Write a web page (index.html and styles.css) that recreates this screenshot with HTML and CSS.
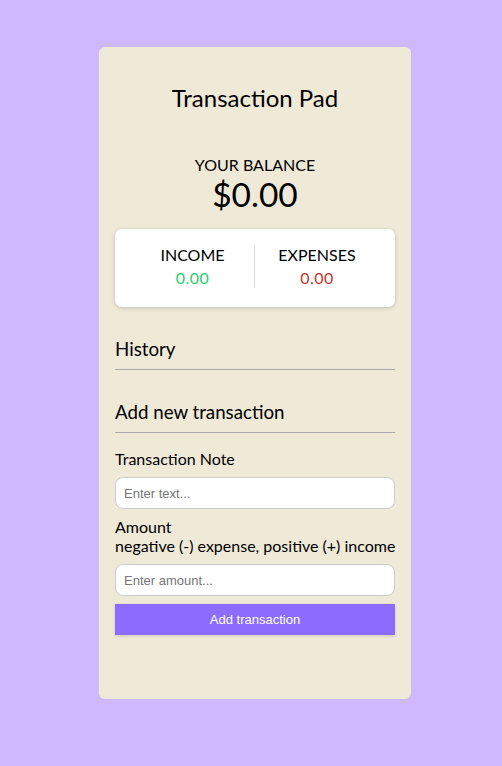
FILE: index.html
```html
<!DOCTYPE html>
<html lang="en">
<head>
<meta charset="utf-8">
<title>Transaction Pad</title>
<link rel="stylesheet" href="styles.css">
</head>
<body>
  <main class="card">
    <h1 class="title">Transaction Pad</h1>
    <section class="balance">
      <h4 class="balance-label">YOUR BALANCE</h4>
      <div class="balance-value">$0.00</div>
    </section>
    <section class="summary">
      <div class="summary-col">
        <div class="summary-label">INCOME</div>
        <div class="summary-value plus">0.00</div>
      </div>
      <div class="summary-col">
        <div class="summary-label">EXPENSES</div>
        <div class="summary-value minus">0.00</div>
      </div>
    </section>
    <h3 class="section-title">History</h3>
    <h3 class="section-title">Add new transaction</h3>
    <form class="form">
      <label class="field-label" for="note">Transaction Note</label>
      <input class="field-input" id="note" type="text" placeholder="Enter text...">
      <label class="field-label nowrap" for="amount">Amount<br>negative (-) expense, positive (+) income</label>
      <input class="field-input" id="amount" type="text" placeholder="Enter amount...">
      <button class="btn" type="button">Add transaction</button>
    </form>
  </main>
</body>
</html>
```
FILE: styles.css
```css
* { box-sizing: border-box; }
html, body { margin: 0; padding: 0; }
body {
  background: #cfb8fd;
  font-family: Lato, "Open Sans", sans-serif;
  color: #000;
  display: flex;
  justify-content: center;
  padding: 47px 0 0 8px;
  min-height: 766px;
}
.card {
  width: 312px;
  height: 652px;
  background: #efe9d8;
  border-radius: 6px;
  padding: 36px 16px 0;
  display: flex;
  flex-direction: column;
}
.title {
  margin: 0;
  text-align: center;
  font-size: 24px;
  line-height: 30px;
  font-weight: 400;
}
.balance {
  margin-top: 42px;
  text-align: center;
}
.balance-label {
  margin: 0;
  font-size: 16px;
  line-height: 20px;
  font-weight: 400;
}
.balance-value {
  font-size: 33.5px;
  line-height: 38px;
}
.summary {
  margin-top: 16px;
  background: #fff;
  border-radius: 7px;
  box-shadow: 0 1px 4px rgba(0,0,0,0.18);
  display: grid;
  grid-template-columns: 1fr 1fr;
  padding: 16px 16px 19px;
}
.summary-col {
  text-align: center;
}
.summary-col:first-child { border-right: 1px solid #ddd; }
.summary-label { font-size: 16px; line-height: 20px; }
.summary-value { font-size: 16px; line-height: 20px; margin-top: 3px; letter-spacing: 0.5px; }
.plus { color: #2ecc71; }
.minus { color: #c0392b; }
.section-title {
  margin: 30px 0 0;
  font-size: 18.72px;
  line-height: 24px;
  font-weight: 400;
  padding-bottom: 8px;
  border-bottom: 1px solid #aaa;
}
.form { display: flex; flex-direction: column; margin-top: 16px; }
.field-label { font-size: 16px; line-height: 19px; }
.nowrap { white-space: nowrap; }
.field-input {
  margin: 9px 0 8px;
  height: 32px;
  border: 1px solid #ccc;
  border-radius: 8px;
  padding: 0 8px;
  font-family: "Liberation Sans", Arial, sans-serif;
  font-size: 13px;
  background: #fff;
}
.field-input::placeholder { color: #757575; }
.btn {
  margin-top: 0;
  height: 31px;
  border: 0;
  background: #8b6cff;
  color: #fff;
  font-family: "Liberation Sans", Arial, sans-serif;
  font-size: 13px;
  box-shadow: 0 1px 3px rgba(0,0,0,0.15);
}
```
